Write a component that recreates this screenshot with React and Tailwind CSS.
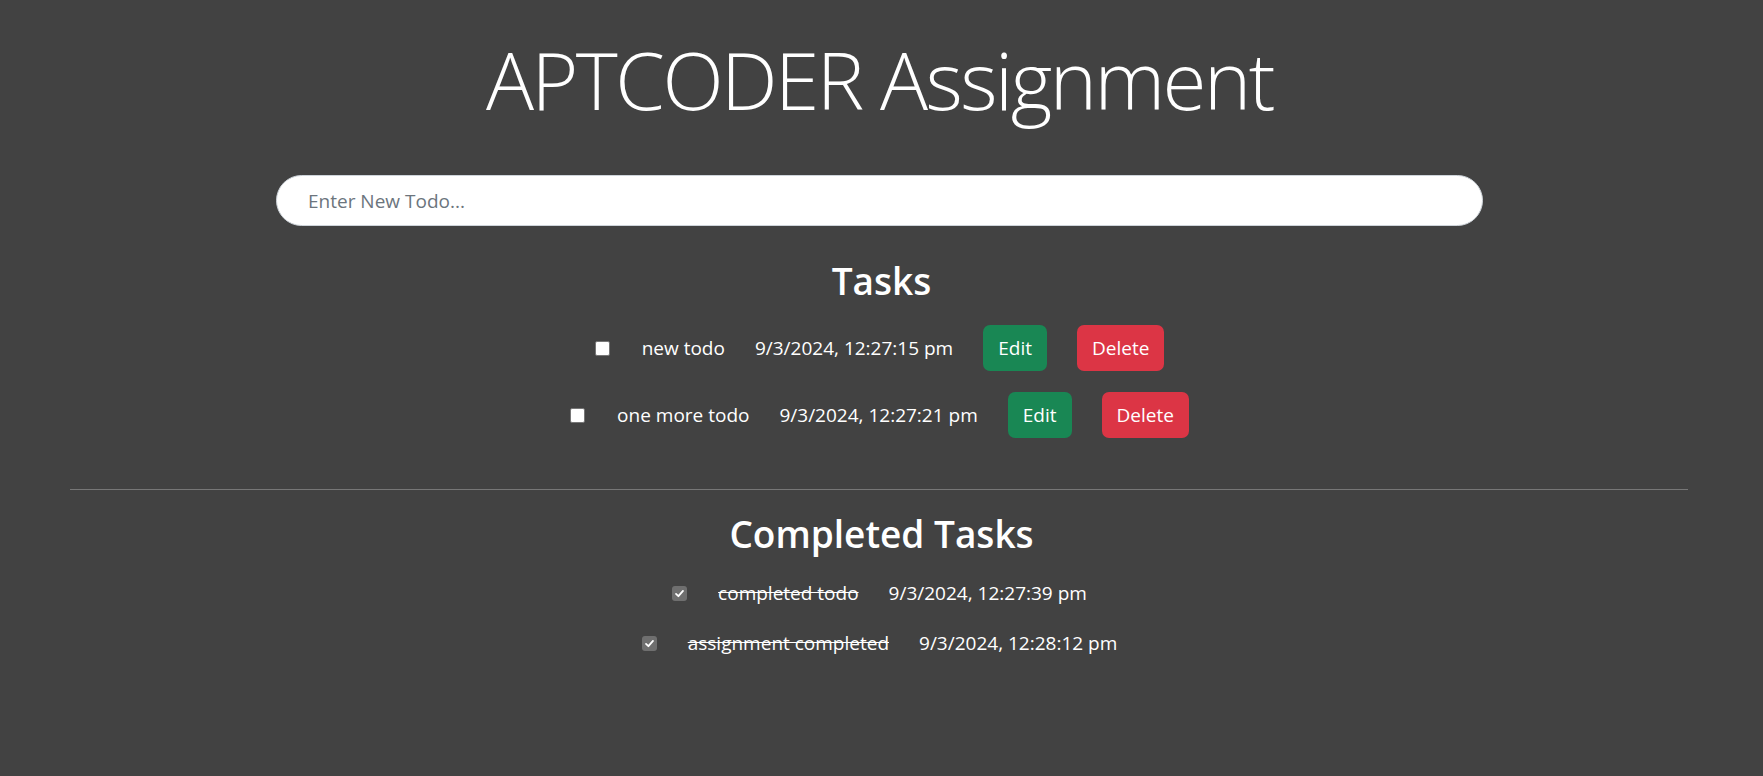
import React from 'react';

const tasks = [
  { id: 1, text: 'new todo', date: '9/3/2024, 12:27:15 pm' },
  { id: 2, text: 'one more todo', date: '9/3/2024, 12:27:21 pm' },
];

const completed = [
  { id: 3, text: 'completed todo', date: '9/3/2024, 12:27:39 pm' },
  { id: 4, text: 'assignment completed', date: '9/3/2024, 12:28:12 pm' },
];

const Box = ({ checked }) =>
  checked ? (
    <span className="w-[15px] h-[15px] rounded-[3px] bg-[#6f6f6f] flex items-center justify-center shrink-0">
      <svg viewBox="0 0 12 12" className="w-[11px] h-[11px]">
        <path d="M2.2 6.4 L4.8 8.9 L9.8 3.2" fill="none" stroke="white" strokeWidth="2" strokeLinecap="round" strokeLinejoin="round" />
      </svg>
    </span>
  ) : (
    <span className="block w-[15px] h-[15px] rounded-[2px] bg-white border border-[#767676] shrink-0" />
  );

const App = () => {
  return (
    <div className="min-h-screen bg-[#424242] text-white font-['Open_Sans',sans-serif] pb-10">
      <h1 className="pt-[31px] text-center text-[80px] font-light leading-[1.2] tracking-[-2.5px] pr-[4px]">APTCODER Assignment</h1>

      <div className="mt-[48px] flex justify-center pr-[4px]">
        <input
          type="text"
          placeholder="Enter New Todo..."
          className="w-[1207px] h-[51px] rounded-full bg-white border border-[#ced4da] px-[31px] text-[19px] text-[#212529] placeholder:text-[#6c757d] outline-none"
        />
      </div>

      <h2 className="mt-[33px] text-center text-[37px] font-semibold leading-[1.2]">Tasks</h2>

      <div className="mt-[22px] flex flex-col gap-[21px] pr-[4px]">
        {tasks.map(t => (
          <div key={t.id} className="flex items-center justify-center gap-[30px] text-[19px] leading-[1.5]">
            <span className="mr-[2px]"><Box /></span>
            <span>{t.text}</span>
            <span>{t.date}</span>
            <button className="h-[46px] px-[15px] rounded-[7px] bg-[#198754] text-white">Edit</button>
            <button className="h-[46px] px-[15px] rounded-[7px] bg-[#dc3545] text-white">Delete</button>
          </div>
        ))}
      </div>

      <hr className="mt-[51px] ml-[70px] w-[1618px] border-0 border-t border-[#777777]" />

      <h2 className="mt-[22px] text-center text-[37px] font-semibold leading-[1.2]">Completed Tasks</h2>

      <div className="mt-[22px] flex flex-col gap-[22px] pr-[4px]">
        {completed.map(t => (
          <div key={t.id} className="flex items-center justify-center gap-[30px] text-[19px] leading-[1.5]">
            <span className="mr-[1px]"><Box checked /></span>
            <span className="line-through">{t.text}</span>
            <span>{t.date}</span>
          </div>
        ))}
      </div>
    </div>
  );
};

export default App;
